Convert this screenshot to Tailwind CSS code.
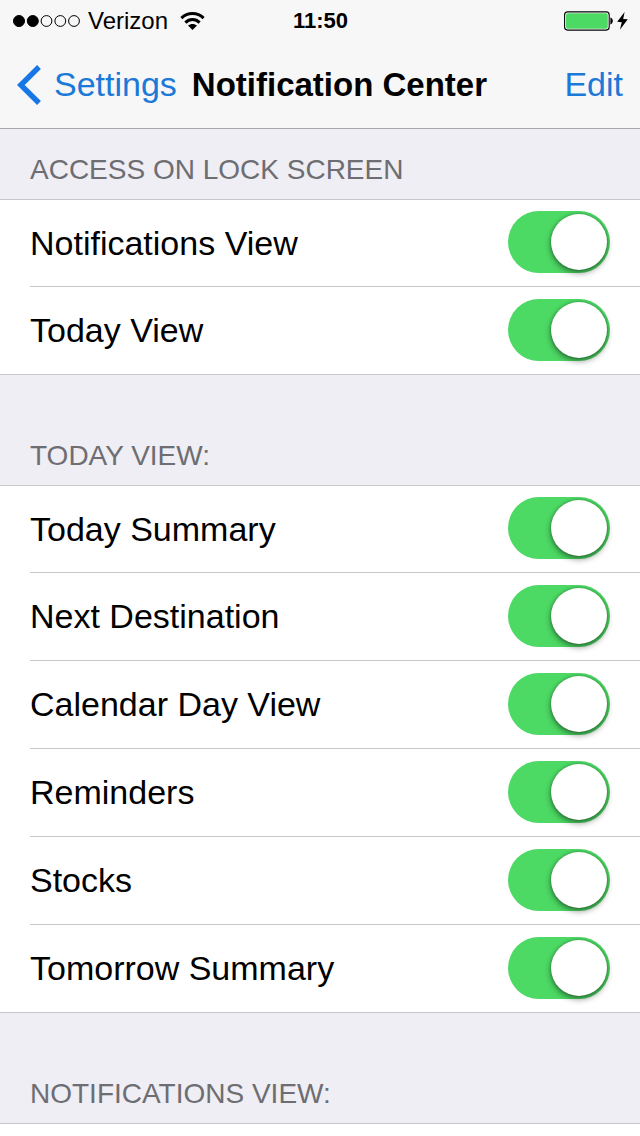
<!DOCTYPE html>
<html lang="en">
<head>
  <meta charset="UTF-8" />
  <meta name="viewport" content="width=device-width, initial-scale=1.0"/>
  <title>Notification Center</title>
  <script src="https://cdn.jsdelivr.net/npm/@tailwindcss/browser@4"></script>
</head>
<body class="flex min-h-screen flex-col bg-[#efeef4] font-['Liberation_Sans',Arial,sans-serif] text-black">
  <header class="border-b border-[#a7a6ac] bg-[#f7f7f7]">
    <!-- Status bar -->
    <div class="grid h-[41px] grid-cols-3 items-center pl-[13px] pr-3">
      <div class="flex items-center gap-2">
        <svg class="shrink-0" width="67" height="12" viewBox="0 0 67 12" fill="none" stroke="#000">
          <circle cx="6" cy="6" r="5.5" fill="#000"/>
          <circle cx="19.8" cy="6" r="5.5" fill="#000"/>
          <circle cx="33.5" cy="6" r="5.4"/>
          <circle cx="47.3" cy="6" r="5.4"/>
          <circle cx="61" cy="6" r="5.4"/>
        </svg>
        <span class="text-2xl">Verizon</span>
        <svg class="ml-1 shrink-0" width="25" height="18" viewBox="0 0 25 18" fill="none" stroke="#000" stroke-width="3">
          <path d="M1.4 6.1C7.6 .1 17.4 .1 23.6 6.1"/>
          <path d="M5.4 10.6C9.4 6.6 15.6 6.6 19.6 10.6"/>
          <path d="M12.5 18L8 13.5C10.6 11.4 14.4 11.4 17 13.5Z" fill="#000" stroke="none"/>
        </svg>
      </div>
      <time class="text-center text-[22px] font-bold">11:50</time>
      <div class="flex items-center justify-end gap-1">
        <svg width="49" height="20" viewBox="0 0 49 20">
          <rect x=".6" y=".9" width="44.6" height="18.2" rx="3" fill="#fff" stroke="#000" stroke-width="1.1"/>
          <rect x="2" y="2.3" width="41.8" height="15.4" rx="1.8" fill="#4cd964"/>
          <path d="M46.4 6.6C49.6 7.4 49.6 12.6 46.4 13.4Z" fill="#000"/>
        </svg>
        <svg width="11" height="18" viewBox="0 0 11 18">
          <path d="M7.6 0L.2 9.8L4.8 10.2L2.9 17.8L10.8 7.3L6.2 7Z" fill="#000"/>
        </svg>
      </div>
    </div>
    <!-- Navigation bar -->
    <nav class="flex h-[87px] items-center px-[17px] text-[34px] text-[#1b79d8]">
      <a href="#" class="flex items-center gap-3">
        <svg width="25" height="40" viewBox="0 0 25 40" fill="none" stroke="#1877e6" stroke-width="5.4">
          <path d="M22 2L3.8 20L22 38"/>
        </svg>
        Settings
      </a>
      <h1 class="ml-[15px] text-[33px] font-bold text-black">Notification Center</h1>
      <button type="button" class="ml-auto">Edit</button>
    </nav>
  </header>

  <main class="flex flex-1 flex-col text-[34px]">
    <h2 class="flex h-[70px] items-end px-[30px] pb-[13px] text-[28px] leading-8 text-[#6d6d72]">ACCESS ON LOCK SCREEN</h2>
    <ul class="bg-white">
      <li class="h-[88px] border-[#c8c7cc] pl-[30px] first:border-t last:border-b">
        <label class="flex h-full items-center justify-between border-b border-[#c8c7cc] pr-[30px]">
          Notifications View
          <input type="checkbox" checked class="mb-0.5 h-[62px] w-[102px] appearance-none rounded-full bg-[#d8d8dc] p-[3px] before:block before:size-14 before:rounded-full before:bg-white before:shadow-[0_3px_6px_rgba(0,0,0,0.45),0_0_3px_rgba(0,0,0,0.3)] checked:bg-[#4cd964] checked:before:translate-x-10">
        </label>
      </li>
      <li class="h-[88px] border-[#c8c7cc] pl-[30px] first:border-t last:border-b">
        <label class="flex h-full items-center justify-between pr-[30px]">
          Today View
          <input type="checkbox" checked class="mb-0.5 h-[62px] w-[102px] appearance-none rounded-full bg-[#d8d8dc] p-[3px] before:block before:size-14 before:rounded-full before:bg-white before:shadow-[0_3px_6px_rgba(0,0,0,0.45),0_0_3px_rgba(0,0,0,0.3)] checked:bg-[#4cd964] checked:before:translate-x-10">
        </label>
      </li>
    </ul>

    <h2 class="flex h-[110px] items-end px-[30px] pb-[13px] text-[28px] leading-8 text-[#6d6d72]">TODAY VIEW:</h2>
    <ul class="bg-white">
      <li class="h-[88px] border-[#c8c7cc] pl-[30px] first:border-t last:border-b">
        <label class="flex h-full items-center justify-between border-b border-[#c8c7cc] pr-[30px]">
          Today Summary
          <input type="checkbox" checked class="mb-0.5 h-[62px] w-[102px] appearance-none rounded-full bg-[#d8d8dc] p-[3px] before:block before:size-14 before:rounded-full before:bg-white before:shadow-[0_3px_6px_rgba(0,0,0,0.45),0_0_3px_rgba(0,0,0,0.3)] checked:bg-[#4cd964] checked:before:translate-x-10">
        </label>
      </li>
      <li class="h-[88px] border-[#c8c7cc] pl-[30px] first:border-t last:border-b">
        <label class="flex h-full items-center justify-between border-b border-[#c8c7cc] pr-[30px]">
          Next Destination
          <input type="checkbox" checked class="mb-0.5 h-[62px] w-[102px] appearance-none rounded-full bg-[#d8d8dc] p-[3px] before:block before:size-14 before:rounded-full before:bg-white before:shadow-[0_3px_6px_rgba(0,0,0,0.45),0_0_3px_rgba(0,0,0,0.3)] checked:bg-[#4cd964] checked:before:translate-x-10">
        </label>
      </li>
      <li class="h-[88px] border-[#c8c7cc] pl-[30px] first:border-t last:border-b">
        <label class="flex h-full items-center justify-between border-b border-[#c8c7cc] pr-[30px]">
          Calendar Day View
          <input type="checkbox" checked class="mb-0.5 h-[62px] w-[102px] appearance-none rounded-full bg-[#d8d8dc] p-[3px] before:block before:size-14 before:rounded-full before:bg-white before:shadow-[0_3px_6px_rgba(0,0,0,0.45),0_0_3px_rgba(0,0,0,0.3)] checked:bg-[#4cd964] checked:before:translate-x-10">
        </label>
      </li>
      <li class="h-[88px] border-[#c8c7cc] pl-[30px] first:border-t last:border-b">
        <label class="flex h-full items-center justify-between border-b border-[#c8c7cc] pr-[30px]">
          Reminders
          <input type="checkbox" checked class="mb-0.5 h-[62px] w-[102px] appearance-none rounded-full bg-[#d8d8dc] p-[3px] before:block before:size-14 before:rounded-full before:bg-white before:shadow-[0_3px_6px_rgba(0,0,0,0.45),0_0_3px_rgba(0,0,0,0.3)] checked:bg-[#4cd964] checked:before:translate-x-10">
        </label>
      </li>
      <li class="h-[88px] border-[#c8c7cc] pl-[30px] first:border-t last:border-b">
        <label class="flex h-full items-center justify-between border-b border-[#c8c7cc] pr-[30px]">
          Stocks
          <input type="checkbox" checked class="mb-0.5 h-[62px] w-[102px] appearance-none rounded-full bg-[#d8d8dc] p-[3px] before:block before:size-14 before:rounded-full before:bg-white before:shadow-[0_3px_6px_rgba(0,0,0,0.45),0_0_3px_rgba(0,0,0,0.3)] checked:bg-[#4cd964] checked:before:translate-x-10">
        </label>
      </li>
      <li class="h-[88px] border-[#c8c7cc] pl-[30px] first:border-t last:border-b">
        <label class="flex h-full items-center justify-between pr-[30px]">
          Tomorrow Summary
          <input type="checkbox" checked class="mb-0.5 h-[62px] w-[102px] appearance-none rounded-full bg-[#d8d8dc] p-[3px] before:block before:size-14 before:rounded-full before:bg-white before:shadow-[0_3px_6px_rgba(0,0,0,0.45),0_0_3px_rgba(0,0,0,0.3)] checked:bg-[#4cd964] checked:before:translate-x-10">
        </label>
      </li>
    </ul>

    <h2 class="flex h-[110px] items-end px-[30px] pb-[13px] text-[28px] leading-8 text-[#6d6d72]">NOTIFICATIONS VIEW:</h2>
    <div class="flex-1 border-t border-[#c8c7cc] bg-white"></div>
  </main>
</body>
</html>
